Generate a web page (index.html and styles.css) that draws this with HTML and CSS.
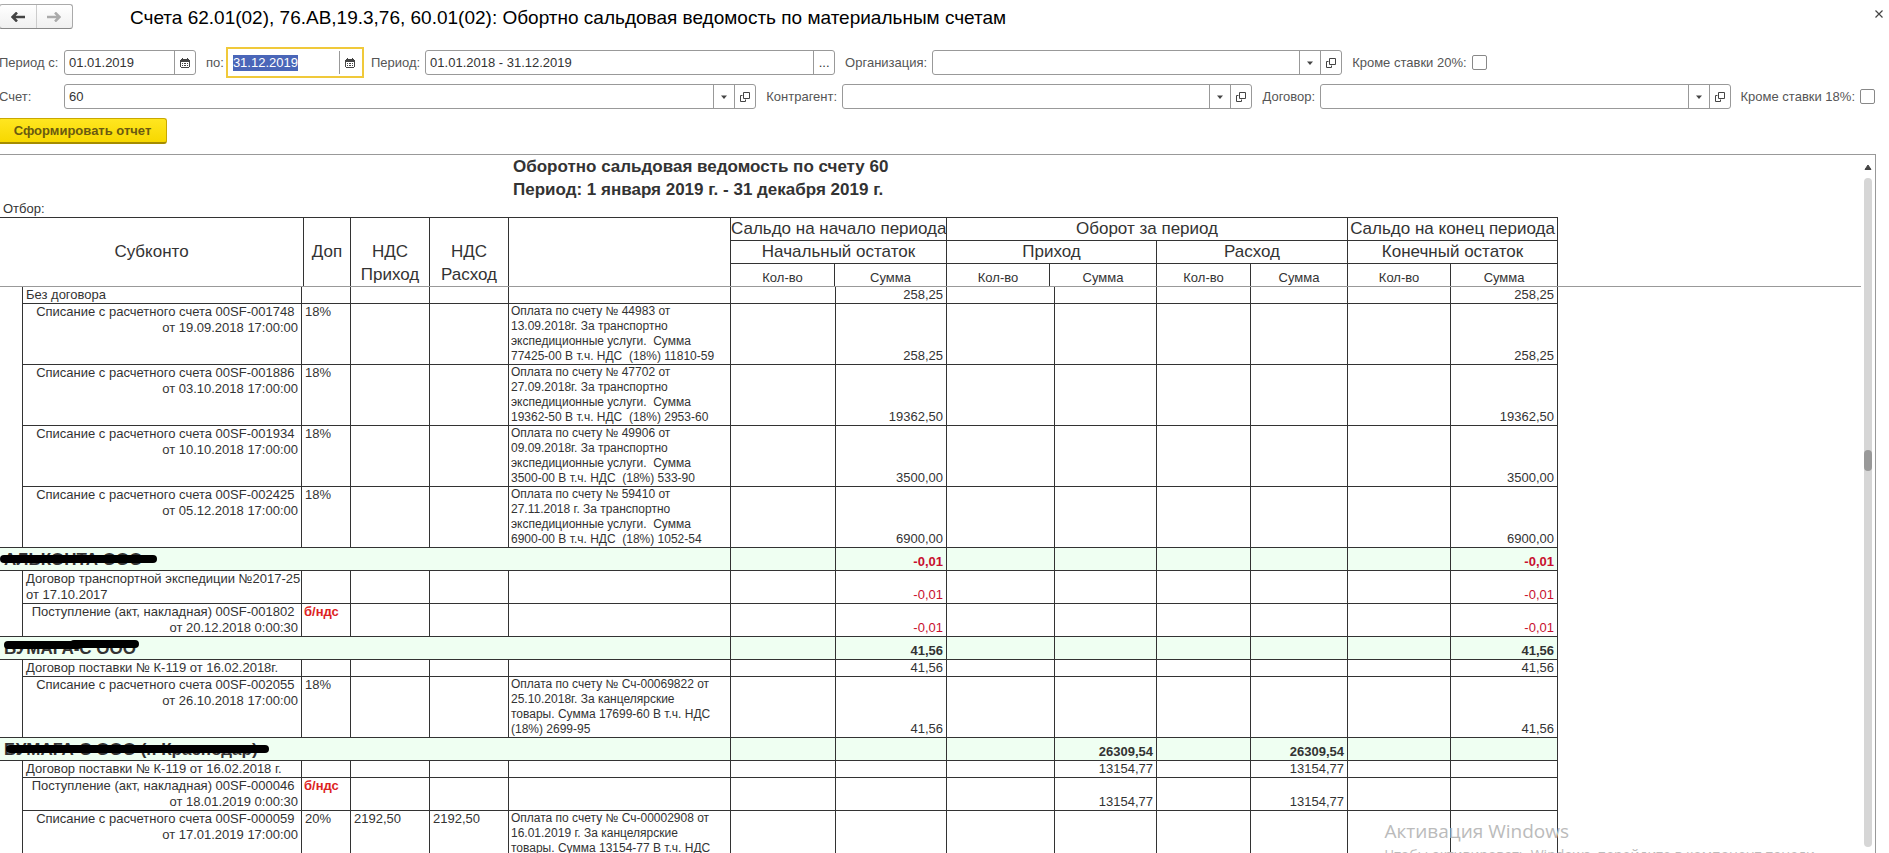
FILE: index.html
```html
<!DOCTYPE html>
<html lang="ru">
<head>
<meta charset="utf-8">
<title>Оборотно сальдовая ведомость</title>
<link rel="stylesheet" href="styles.css">
<script src="app.js" defer></script>
</head>
<body>
<svg class="defs" aria-hidden="true">
  <symbol id="cal" viewBox="0 0 10 10"><path d="M1 1h8v1h1v7H9v1H1V9H0V2h1z" fill="#444"/><path d="M2 0h1v1H2zM7 0h1v1H7z" fill="#444"/><path d="M1 4h8v5H1z" fill="#fff"/><path d="M2 5h1v1H2zM4 5h2v1H4zM7 5h1v1H7zM2 7h1v1H2zM4 7h2v1H4zM7 7h1v1H7z" fill="#444"/></symbol>
  <symbol id="open" viewBox="0 0 10 10"><path d="M3.5.5h6v6h-6zM2.500 3.500h-2v6h5v-2" fill="none" stroke="#444"/></symbol>
  <symbol id="down" viewBox="0 0 10 10"><path d="M2 3.500h6L5 7z" fill="#444"/></symbol>
</svg>
<header class="titlebar">
  <div class="nav">
    <button type="button" aria-label="Назад"><svg width="14" height="10" viewBox="0 0 14 10"><path d="M6 .5 1.500 5 6 9.500M2 5h12" fill="none" stroke="#444" stroke-width="2.500"/></svg></button>
    <button type="button" aria-label="Вперед" disabled><svg width="14" height="10" viewBox="0 0 14 10"><path d="M8 .5 12.500 5 8 9.500M12 5H0" fill="none" stroke="#aaa" stroke-width="2.500"/></svg></button>
  </div>
  <h1>Счета 62.01(02), 76.АВ,19.3,76, 60.01(02): Обортно сальдовая ведомость по материальным счетам</h1>
  <button type="button" class="close" aria-label="Закрыть"><svg width="8" height="8" viewBox="0 0 8 8"><path d="M.5.5l7 7M7.500.5l-7 7" stroke="#444" stroke-width="1.200"/></svg></button>
</header>
<form class="filters">
  <div class="line">
    <label class="lead" for="from">Период с:</label>
    <span class="field date"><input id="from" value="01.01.2019"><button type="button" aria-label="Календарь"><svg width="10" height="10"><use href="#cal"/></svg></button></span>
    <label for="to">по:</label>
    <span class="field date focus"><input id="to" value="31.12.2019"><button type="button" aria-label="Календарь"><svg width="10" height="10"><use href="#cal"/></svg></button></span>
    <label for="period">Период:</label>
    <span class="field wide"><input id="period" value="01.01.2018 - 31.12.2019"><button type="button" aria-label="Выбрать период">...</button></span>
    <label for="org">Организация:</label>
    <span class="field wide"><input id="org"><button type="button" aria-label="Список"><svg width="10" height="10"><use href="#down"/></svg></button><button type="button" aria-label="Открыть"><svg width="10" height="10"><use href="#open"/></svg></button></span>
    <label for="no20">Кроме ставки 20%:</label>
    <input type="checkbox" id="no20">
  </div>
  <div class="line">
    <label class="lead" for="acc">Счет:</label>
    <span class="field account"><input id="acc" value="60"><button type="button" aria-label="Список"><svg width="10" height="10"><use href="#down"/></svg></button><button type="button" aria-label="Открыть"><svg width="10" height="10"><use href="#open"/></svg></button></span>
    <label for="agent">Контрагент:</label>
    <span class="field wide grow"><input id="agent"><button type="button" aria-label="Список"><svg width="10" height="10"><use href="#down"/></svg></button><button type="button" aria-label="Открыть"><svg width="10" height="10"><use href="#open"/></svg></button></span>
    <label for="deal">Договор:</label>
    <span class="field wide grow"><input id="deal"><button type="button" aria-label="Список"><svg width="10" height="10"><use href="#down"/></svg></button><button type="button" aria-label="Открыть"><svg width="10" height="10"><use href="#open"/></svg></button></span>
    <label for="no18">Кроме ставки 18%:</label>
    <input type="checkbox" id="no18">
  </div>
  <button type="button" class="run">Сформировать отчет</button>
</form>
<main class="report">
  <div class="sheet">
    <div class="frozen">
      <div class="heading">
        <h2>Оборотно сальдовая ведомость по счету 60</h2>
        <h2>Период: 1 января 2019 г. - 31 декабря 2019 г.</h2>
      </div>
      <p class="selection">Отбор:</p>
      <table class="head">
        <colgroup><col class="h-sub"><col class="h-dop"><col class="c-vat"><col class="c-vat"><col class="c-note"><col class="h-q1"><col class="h-s1"><col class="h-q2"><col class="h-s2"><col class="c-q3"><col class="c-s3"><col class="c-q4"><col class="c-s4"></colgroup>
        <thead>
          <tr><th rowspan="3">Субконто</th><th rowspan="3">Доп</th><th rowspan="3" class="low">НДС Приход</th><th rowspan="3" class="low">НДС Расход</th><th rowspan="3"></th><th colspan="2">Сальдо на начало периода</th><th colspan="4">Оборот за период</th><th colspan="2">Сальдо на конец периода</th></tr>
          <tr><th colspan="2">Начальный остаток</th><th colspan="2">Приход</th><th colspan="2">Расход</th><th colspan="2">Конечный остаток</th></tr>
          <tr class="units"><th>Кол-во</th><th>Сумма</th><th>Кол-во</th><th>Сумма</th><th>Кол-во</th><th>Сумма</th><th>Кол-во</th><th>Сумма</th></tr>
        </thead>
      </table>
    </div>
    <table class="body">
      <colgroup><col class="c-ind"><col class="c-sub"><col class="c-dop"><col class="c-vat"><col class="c-vat"><col class="c-note"><col class="c-q1"><col class="c-s1"><col class="c-q2"><col class="c-s2"><col class="c-q3"><col class="c-s3"><col class="c-q4"><col class="c-s4"></colgroup>
      <tbody>
        <tr class="short"><td rowspan="5"></td><td>Без договора</td><td></td><td></td><td></td><td></td><td></td><td class="n">258,25</td><td></td><td></td><td></td><td></td><td></td><td class="n">258,25</td></tr>
        <tr class="tall"><td class="doc">Списание с расчетного счета 00SF-001748&nbsp;<br>от 19.09.2018 17:00:00</td><td>18%</td><td></td><td></td><td class="note">Оплата по счету № 44983 от<br>13.09.2018г. За транспортно<br>экспедиционные услуги.&nbsp; Сумма<br>77425-00 В т.ч. НДС&nbsp; (18%) 11810-59</td><td></td><td class="n">258,25</td><td></td><td></td><td></td><td></td><td></td><td class="n">258,25</td></tr>
        <tr class="tall"><td class="doc">Списание с расчетного счета 00SF-001886&nbsp;<br>от 03.10.2018 17:00:00</td><td>18%</td><td></td><td></td><td class="note">Оплата по счету № 47702 от<br>27.09.2018г. За транспортно<br>экспедиционные услуги.&nbsp; Сумма<br>19362-50 В т.ч. НДС&nbsp; (18%) 2953-60</td><td></td><td class="n">19362,50</td><td></td><td></td><td></td><td></td><td></td><td class="n">19362,50</td></tr>
        <tr class="tall"><td class="doc">Списание с расчетного счета 00SF-001934&nbsp;<br>от 10.10.2018 17:00:00</td><td>18%</td><td></td><td></td><td class="note">Оплата по счету № 49906 от<br>09.09.2018г. За транспортно<br>экспедиционные услуги.&nbsp; Сумма<br>3500-00 В т.ч. НДС&nbsp; (18%) 533-90</td><td></td><td class="n">3500,00</td><td></td><td></td><td></td><td></td><td></td><td class="n">3500,00</td></tr>
        <tr class="tall"><td class="doc">Списание с расчетного счета 00SF-002425&nbsp;<br>от 05.12.2018 17:00:00</td><td>18%</td><td></td><td></td><td class="note">Оплата по счету № 59410 от<br>27.11.2018 г. За транспортно<br>экспедиционные услуги.&nbsp; Сумма<br>6900-00 В т.ч. НДС&nbsp; (18%) 1052-54</td><td></td><td class="n">6900,00</td><td></td><td></td><td></td><td></td><td></td><td class="n">6900,00</td></tr>
      </tbody>
      <tbody>
        <tr class="group"><td colspan="6">АЛЬКОНТА ООО<svg class="mark" width="280" height="22" viewBox="0 0 280 22"><path d="M4 11h149" stroke="#000" stroke-width="8" stroke-linecap="round"/></svg></td><td></td><td class="n neg">-0,01</td><td></td><td></td><td></td><td></td><td></td><td class="n neg">-0,01</td></tr>
        <tr class="mid"><td rowspan="2"></td><td class="name">Договор транспортной экспедиции №2017-25<br>от 17.10.2017</td><td></td><td></td><td></td><td></td><td></td><td class="n neg">-0,01</td><td></td><td></td><td></td><td></td><td></td><td class="n neg">-0,01</td></tr>
        <tr class="mid"><td class="doc">Поступление (акт, накладная) 00SF-001802&nbsp;<br>от 20.12.2018 0:00:30</td><td class="novat">б/ндс</td><td></td><td></td><td></td><td></td><td class="n neg">-0,01</td><td></td><td></td><td></td><td></td><td></td><td class="n neg">-0,01</td></tr>
      </tbody>
      <tbody>
        <tr class="group"><td colspan="6">БУМАГА-С ООО<svg class="mark" width="280" height="22" viewBox="0 0 280 22"><path d="M8 8h70M74 7h61" stroke="#000" stroke-width="8" stroke-linecap="round"/></svg></td><td></td><td class="n">41,56</td><td></td><td></td><td></td><td></td><td></td><td class="n">41,56</td></tr>
        <tr class="short"><td rowspan="2"></td><td>Договор поставки № К-119 от 16.02.2018г.</td><td></td><td></td><td></td><td></td><td></td><td class="n">41,56</td><td></td><td></td><td></td><td></td><td></td><td class="n">41,56</td></tr>
        <tr class="tall"><td class="doc">Списание с расчетного счета 00SF-002055&nbsp;<br>от 26.10.2018 17:00:00</td><td>18%</td><td></td><td></td><td class="note">Оплата по счету № Сч-00069822 от<br>25.10.2018г. За канцелярские<br>товары. Сумма 17699-60 В т.ч. НДС<br>(18%) 2699-95</td><td></td><td class="n">41,56</td><td></td><td></td><td></td><td></td><td></td><td class="n">41,56</td></tr>
      </tbody>
      <tbody>
        <tr class="group"><td colspan="6">БУМАГА-С ООО (г. Краснодар)<svg class="mark" width="280" height="22" viewBox="0 0 280 22"><path d="M10 11h255" stroke="#000" stroke-width="8" stroke-linecap="round"/></svg></td><td></td><td></td><td></td><td class="n">26309,54</td><td></td><td class="n">26309,54</td><td></td><td></td></tr>
        <tr class="short"><td rowspan="3"></td><td>Договор поставки № К-119 от 16.02.2018 г.</td><td></td><td></td><td></td><td></td><td></td><td></td><td></td><td class="n">13154,77</td><td></td><td class="n">13154,77</td><td></td><td></td></tr>
        <tr class="mid"><td class="doc">Поступление (акт, накладная) 00SF-000046&nbsp;<br>от 18.01.2019 0:00:30</td><td class="novat">б/ндс</td><td></td><td></td><td></td><td></td><td></td><td></td><td class="n">13154,77</td><td></td><td class="n">13154,77</td><td></td><td></td></tr>
        <tr class="tall"><td class="doc">Списание с расчетного счета 00SF-000059&nbsp;<br>от 17.01.2019 17:00:00</td><td>20%</td><td>2192,50</td><td>2192,50</td><td class="note">Оплата по счету № Сч-00002908 от<br>16.01.2019 г. За канцелярские<br>товары. Сумма 13154-77 В т.ч. НДС</td><td></td><td></td><td></td><td></td><td></td><td></td><td></td><td></td></tr>
      </tbody>
    </table>
  </div>
  <div class="scroll">
    <svg width="8" height="6" viewBox="0 0 8 6"><path d="M1 5.500 4 1l3 4.500z" fill="#444" stroke="#444"/></svg>
    <div class="track"><div class="thumb"></div></div>
  </div>
</main>
<aside class="watermark"><strong>Активация Windows</strong><span>Чтобы активировать Windows, перейдите в компонент панели</span></aside>
</body>
</html>
```
FILE: styles.css
```css
* { box-sizing: border-box; }
body {
  margin: 0;
  height: 100vh;
  overflow: hidden;
  display: flex;
  flex-direction: column;
  background: #fff;
  color: #333;
  font: 13px/16px "Liberation Sans", Arial, sans-serif;
}
button, input { font: inherit; color: inherit; }
.defs { display: none; }

.titlebar { display: flex; align-items: flex-start; height: 47px; padding-top: 4px; }
.nav {
  display: flex;
  width: 74px;
  height: 25px;
  margin-left: -1px;
  border: 1px solid #aaa;
  border-bottom-color: #888;
  border-radius: 3px;
  background: linear-gradient(#fff, #f0f0f0);
}
.nav button { flex: 1; padding: 0; border: 0; background: none; }
.nav button + button { border-left: 1px solid #ccc; }
h1 { flex: 1; margin: 2px 0 0 57px; font-size: 19px; line-height: 24px; font-weight: 400; color: #000; }
.close { width: 20px; height: 20px; padding: 0; border: 0; background: none; }

.filters { display: flex; flex-direction: column; gap: 3px; padding-right: 14px; }
.line { display: flex; align-items: center; height: 31px; color: #555; }
.line label { margin: 0 5px 0 10px; white-space: nowrap; }
.line .lead { width: 65px; margin: 0 0 0 -1px; }
.field {
  display: flex;
  height: 25px;
  border: 1px solid #999;
  border-radius: 3px;
  background: #fff;
  color: #333;
  overflow: hidden;
}
.field input { flex: 1; min-width: 0; padding: 0 4px; border: 0; background: none; outline: 0; }
.field button { width: 21px; padding: 0; border: 0; border-left: 1px solid #999; background: none; }
.field svg, .nav svg, .close svg { display: block; margin: auto; }
.date { width: 132px; }
.focus { width: 138px; height: 31px; margin: 0 -3px; border: 2px solid #f0c93a; border-radius: 0; padding: 1px; }
.focus input::selection { background: #4a66b8; color: #fff; }
.focus button { margin: 1px 0; width: 22px; }
.wide { width: 410px; }
.account { flex: 693 1 0; }
.grow { flex: 410 1 0; }
.line input[type="checkbox"] {
  appearance: none;
  width: 15px;
  height: 15px;
  margin: 0;
  border: 1px solid #888;
  border-radius: 2px;
  background: #fff;
}
.run {
  align-self: flex-start;
  width: 169px;
  height: 26px;
  margin: 3px 0 0 -2px;
  padding: 0;
  border: 1px solid #c9a800;
  border-bottom: 2px solid #a58c00;
  border-radius: 3px;
  background: linear-gradient(#ffe620, #f7d800);
  color: #6a5a10;
  font-weight: 700;
}

.report {
  flex: 1;
  min-height: 0;
  display: flex;
  margin: 10px 13px 0 0;
  border-top: 1px solid #999;
  border-right: 1px solid #999;
  overflow: hidden;
}
.sheet { flex: 1; min-width: 0; overflow: hidden; }
.frozen { border-bottom: 1px solid #999; }
.heading { padding-left: 513px; }
h2 { margin: 0; font-size: 17px; line-height: 23px; font-weight: 700; }
.selection { margin: 0; padding-left: 3px; }

table { table-layout: fixed; width: 1558px; border-collapse: separate; border-spacing: 0; }
th, td { padding: 0 3px; border-right: 1px solid #333; border-bottom: 1px solid #333; }
.h-sub { width: 304px; } .h-dop { width: 47px; }
.h-q1 { width: 104px; } .h-s1 { width: 112px; } .h-q2 { width: 103px; } .h-s2 { width: 107px; }
.c-ind { width: 23px; } .c-sub { width: 279px; } .c-dop { width: 49px; } .c-vat { width: 79px; } .c-note { width: 222px; }
.c-q1 { width: 105px; } .c-s1 { width: 111px; } .c-q2 { width: 108px; } .c-s2 { width: 102px; }
.c-q3 { width: 94px; } .c-s3 { width: 97px; } .c-q4 { width: 103px; } .c-s4 { width: 107px; }

.head { border-top: 1px solid #333; }
.head th { height: 23px; padding: 0; font-size: 17px; line-height: 22px; font-weight: 400; white-space: nowrap; }
.head th[rowspan], .head .units th { border-bottom: 0; }
.head .low { padding: 22px 8px 0; line-height: 23px; white-space: normal; }
.head .units th { height: 22px; padding-top: 6px; font-size: 13px; line-height: 16px; }

.body td { vertical-align: top; }
.short { height: 17px; }
.mid { height: 33px; }
.tall { height: 61px; }
.group { height: 23px; background: #effff2; font-weight: 700; }
.body .name { white-space: nowrap; }
.body .doc { text-align: right; white-space: nowrap; }
.body .note { padding: 0 2px; font-size: 12px; line-height: 15px; white-space: nowrap; }
.body .n { text-align: right; vertical-align: bottom; }
.body .neg { color: #c8102e; }
.body .novat { padding: 0 2px; color: #d22; font-weight: 700; }
.group td[colspan] { position: relative; padding: 2px 4px 0; font-size: 17px; line-height: 20px; }
.mark { position: absolute; left: 0; top: 0; }

.scroll { display: flex; flex-direction: column; align-items: center; width: 14px; padding: 9px 3px 6px; gap: 8px; }
.track { flex: 1; width: 8px; border-radius: 4px; background: #d6d6d6; padding-top: 272px; }
.thumb { height: 21px; border-radius: 4px; background: #999; }

.watermark { position: absolute; right: 74px; bottom: -13px; display: flex; flex-direction: column; color: #bbb; font: 14px/22px "Open Sans", sans-serif; }
.watermark strong { font-size: 19px; line-height: 26px; font-weight: 400; }
```
FILE: app.js
```js
const endDate = document.getElementById("to");
endDate.focus();
endDate.select();
```
